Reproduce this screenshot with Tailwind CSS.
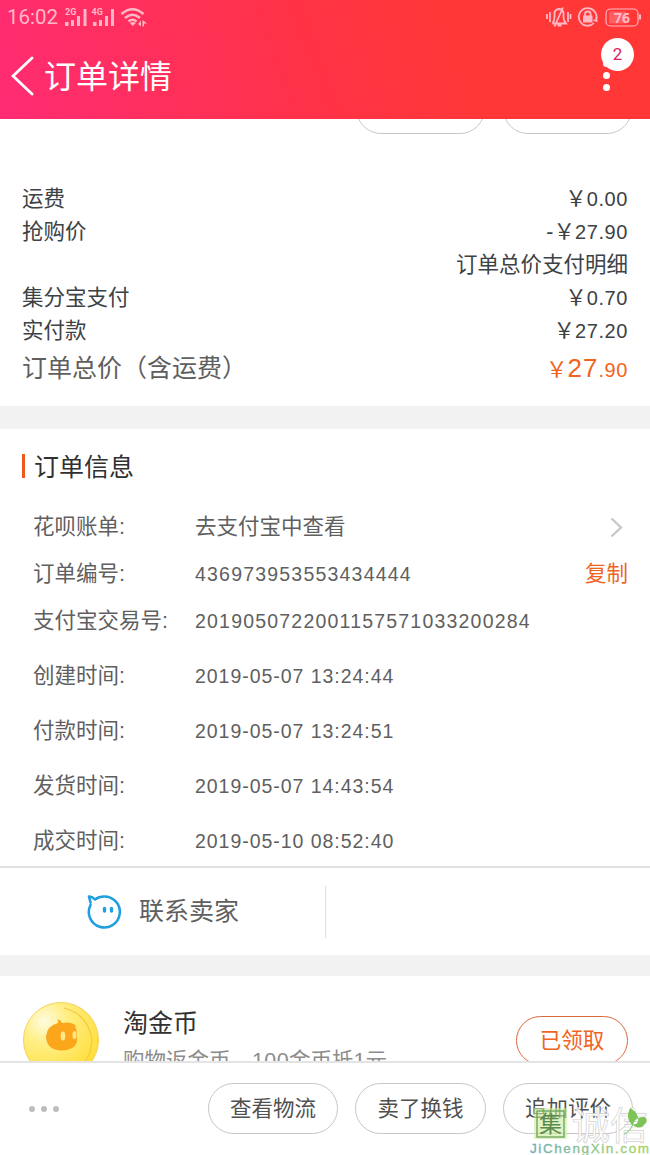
<!DOCTYPE html>
<html lang="zh-CN">
<head>
    <meta charset="UTF-8">
    <meta name="viewport" content="width=device-width, initial-scale=1.0">
    <title>订单详情</title>
    <script src="https://cdn.jsdelivr.net/npm/@tailwindcss/browser@4"></script>
</head>
<body class="relative flex flex-col w-[650px] h-[1155px] overflow-hidden bg-white text-[#5f5f5f] font-['Liberation_Sans','Noto_Sans_CJK_SC',sans-serif]">
    <!-- Header -->
    <header class="h-[119px] shrink-0 bg-linear-[70deg] from-[#ff2b74] via-[#ff3344] via-50% to-[#ff3737] to-70% text-white">
        <!-- Status bar -->
        <div class="flex items-center h-[33px] pl-[7px] pr-[9px] text-[#ffb9c6]">
            <span class="w-[57px] pt-[1px] font-['Roboto'] text-[20.500px] leading-[32px]">16:02</span>
            <svg width="84" height="22" viewBox="64 5 84 22" fill="currentColor">
                <text x="65" y="14" font-family="Roboto" font-weight="700" font-size="9">2G</text>
                <path d="M65 21h3.500v4h-3.500zM71 19h3v6h-3zM77 15h3v10h-3zM83.500 8h3v17h-3z"/>
                <text x="91.500" y="14" font-family="Roboto" font-weight="700" font-size="9">4G</text>
                <path d="M93 21h3.500v4h-3.500zM99 19h3v6h-3zM105 15h3v10h-3zM111 8h3v17h-3z"/>
                <g fill="none" stroke="currentColor" stroke-width="2.600">
                    <path d="M121.500 13q11-9.500 22 0M125 17q7.500-6.500 15 0M128.500 20.500q4-3.500 8 0"/>
                </g>
                <path d="M129.800 22q3-2 6 0l-3 3zM142.500 19l4.500 3.500h-3v3h-1.500zM141 19.500v6l-3-2.500z"/>
            </svg>
            <svg class="ml-auto" width="98" height="24" viewBox="543 4 98 24" fill="none" stroke="currentColor" stroke-width="1.800">
                <path d="M547 13v5M550 11v10M568 11v10M570.500 13v5M552.500 22.500h13.500q-2.500-3-2.500-6v-4q0-4-4.500-4.500-4.500.500-4.500 4.500v4q0 3-2 6M557.500 24.500h4M563 6.500l-8.500 19"/>
                <path d="M594 22a8.800 8.800 0 1 1 2.200-4"/>
                <path fill="currentColor" stroke="none" d="M583 14.500h9.500v7h-9.500z"/>
                <path d="M585 15v-2q0-2.500 2.800-2.500t2.800 2.500v2M596.500 16v4l-3-1"/>
                <rect x="606" y="8" width="32" height="17" rx="4.500" stroke-width="1.200"/>
                <path fill="currentColor" stroke="none" d="M609 10.500h17v12h-17z" opacity=".3"/>
                <path d="M640 13.500v5" stroke-width="2"/>
                <text x="622" y="22" text-anchor="middle" font-family="Noto Sans" font-weight="700" font-size="14" fill="currentColor" stroke="none">76</text>
            </svg>
        </div>
        <!-- Title bar -->
        <div class="flex items-center h-[86px] pl-[11px] pr-[16px]">
            <svg width="23" height="40" viewBox="0 0 23 40" fill="none" stroke="white" stroke-width="2.800" stroke-linecap="round">
                <path d="M21 2L2 20l19 18"/>
            </svg>
            <h1 class="ml-[10px] pt-[1px] text-[32px] leading-[40px]">订单详情</h1>
            <div class="relative ml-auto w-[33px] h-[76px]">
                <span class="absolute left-[2px] top-[22px] size-[7px] rounded-full bg-white"></span>
                <span class="absolute left-[2px] top-[34px] size-[7px] rounded-full bg-white"></span>
                <span class="absolute left-[2px] top-[46px] size-[7px] rounded-full bg-white"></span>
                <span class="absolute left-0 top-0 size-[33px] rounded-full bg-white text-center font-['Roboto'] text-[17px] leading-[33px] text-[#d8205c]">2</span>
            </div>
        </div>
    </header>

    <main class="flex flex-col flex-1 min-h-0 overflow-hidden">
        <!-- Buttons scrolled under the header -->
        <div class="flex items-end justify-end shrink-0 gap-[18px] h-[15px] pr-[18px] overflow-hidden">
            <div class="w-[129px] h-[50px] shrink-0 rounded-full border border-[#c6c6c6]"></div>
            <div class="w-[129px] h-[50px] shrink-0 rounded-full border border-[#c6c6c6]"></div>
        </div>

        <!-- Price details -->
        <section class="shrink-0 h-[272px] pt-[49px] px-[22px] text-[21.500px] leading-[33px] text-[#3d4245] whitespace-nowrap">
            <div class="flex justify-between h-[33px]"><span>运费</span><span>￥<span class="text-[20px] tracking-[0.600px]">0.00</span></span></div>
            <div class="flex justify-between h-[33px]"><span>抢购价</span><span>-￥<span class="text-[20px] tracking-[0.600px]">27.90</span></span></div>
            <div class="h-[33px] text-right">订单总价支付明细</div>
            <div class="flex justify-between h-[33px]"><span>集分宝支付</span><span>￥<span class="text-[20px] tracking-[0.600px]">0.70</span></span></div>
            <div class="flex justify-between h-[33px]"><span>实付款</span><span>￥<span class="text-[20px] tracking-[0.600px]">27.20</span></span></div>
            <div class="flex justify-between h-[40px] leading-[40px]">
                <span class="text-[25px] text-[#5f5f5f]">订单总价（含运费）</span>
                <span class="text-[#f0641e]">￥<span class="text-[26px] tracking-[1px]">27</span><span class="text-[20px] tracking-[0.600px]">.90</span></span>
            </div>
        </section>

        <div class="shrink-0 h-[23px] bg-[#f2f2f2]"></div>

        <!-- Order info -->
        <section class="shrink-0 h-[439px] pt-[17px] border-b-2 border-[#e0e0e0] text-[21.500px]">
            <div class="flex items-center h-[40px] pl-[22px]">
                <span class="w-[3px] h-[24px] bg-[#ee5a1b]"></span>
                <h2 class="ml-[9px] pt-[1px] text-[25px] leading-[40px] text-[#303030]">订单信息</h2>
            </div>
            <div class="flex items-center h-[47px] mt-[18px] pl-[33px] pr-[27px]">
                <span class="w-[162px]">花呗账单:</span>
                <span>去支付宝中查看</span>
                <svg class="ml-auto" width="13" height="22" viewBox="0 0 13 22" fill="none" stroke="#c8c8c8" stroke-width="2.400"><path d="M1.500 1.500l9.500 9-9.500 9"/></svg>
            </div>
            <div class="flex items-center h-[47px] pl-[33px] pr-[22px]">
                <span class="w-[162px]">订单编号:</span>
                <span class="pt-[1px] text-[19.500px] tracking-[1.200px]">436973953553434444</span>
                <span class="ml-auto text-[#f0641e]">复制</span>
            </div>
            <div class="flex items-center h-[47px] pl-[33px]">
                <span class="w-[162px]">支付宝交易号:</span>
                <span class="pt-[1px] text-[19.500px] tracking-[1.200px]">2019050722001157571033200284</span>
            </div>
            <div class="flex items-center h-[55px] mt-[4px] pl-[33px]">
                <span class="w-[162px]">创建时间:</span>
                <span class="pt-[1px] text-[19.500px] tracking-[0.960px]">2019-05-07 13:24:44</span>
            </div>
            <div class="flex items-center h-[55px] pl-[33px]">
                <span class="w-[162px]">付款时间:</span>
                <span class="pt-[1px] text-[19.500px] tracking-[0.960px]">2019-05-07 13:24:51</span>
            </div>
            <div class="flex items-center h-[55px] pl-[33px]">
                <span class="w-[162px]">发货时间:</span>
                <span class="pt-[1px] text-[19.500px] tracking-[0.960px]">2019-05-07 14:43:54</span>
            </div>
            <div class="flex items-center h-[54px] pl-[33px]">
                <span class="w-[162px]">成交时间:</span>
                <span class="pt-[1px] text-[19.500px] tracking-[0.960px]">2019-05-10 08:52:40</span>
            </div>
        </section>

        <!-- Contact seller -->
        <section class="flex items-center shrink-0 h-[87px]">
            <div class="flex items-center w-[326px] h-[52px] pl-[86px] border-r border-[#dedede]">
                <svg width="36" height="36" viewBox="0 0 36 36" fill="none" stroke="#1f9fe0" stroke-width="2.600" stroke-linecap="round" stroke-linejoin="round">
                    <path d="M4.500 8.500L3 2.500q3-.500 6 3Q13 2.500 18 2.500a15.500 15.500 0 1 1-13.500 8.500"/>
                    <path d="M18.500 14.500v2.500M25.500 14.500v2.500" stroke-width="3.400"/>
                </svg>
                <span class="ml-[17px] pt-[1px] text-[25px]">联系卖家</span>
            </div>
        </section>

        <div class="shrink-0 h-[21px] bg-[#f2f2f2]"></div>

        <!-- Coins -->
        <section class="flex shrink-0 h-[130px] px-[22px] pt-[25px]">
            <svg width="78" height="78" viewBox="0 0 78 78">
                <defs>
                    <radialGradient id="coin" cx=".28" cy=".25" r=".85">
                        <stop offset="0" stop-color="#fffbe0"/>
                        <stop offset=".35" stop-color="#ffef85"/>
                        <stop offset="1" stop-color="#ffdc35"/>
                    </radialGradient>
                </defs>
                <circle cx="39" cy="39" r="37.500" fill="url(#coin)" stroke="#f4d35c"/>
                <path d="M42 7q24 6 28 32-1 16-10 25" fill="none" stroke="#f3c945" stroke-width="1.200"/>
                <path d="M35 18q4 1 5 4 10-2 14 3l-1 1q2 2 2 8v7q-3 9-17 8.500Q24 48 24 35q1-10 12-13 1-2-1-4z" fill="#fca61c"/>
                <ellipse cx="41" cy="35" rx="2.300" ry="4.500" fill="#ffe78a"/>
                <ellipse cx="52.500" cy="34" rx="2" ry="4" fill="#ffe78a"/>
            </svg>
            <div class="ml-[23px]">
                <div class="h-[42px] text-[25px] leading-[44px] text-[#303030]">淘金币</div>
                <div class="text-[21.500px] leading-[36px] text-[#8c8c8c] whitespace-nowrap">购物返金币，<span class="tracking-[0.400px]">100</span>金币抵1元</div>
            </div>
            <div class="ml-auto mt-[15px] w-[112px] h-[49px] rounded-full border border-[#d9683a] text-center text-[21.500px] leading-[49px] text-[#f0641e]">已领取</div>
        </section>
    </main>

    <!-- Bottom actions -->
    <footer class="flex items-center shrink-0 h-[94px] pb-[1px] pl-[29px] pr-[17px] border-t-2 border-[#e4e4e4] bg-white text-[21.500px] text-[#505050]">
        <span class="flex gap-[6px]">
            <span class="size-[6px] rounded-full bg-[#bdbdbd]"></span>
            <span class="size-[6px] rounded-full bg-[#bdbdbd]"></span>
            <span class="size-[6px] rounded-full bg-[#bdbdbd]"></span>
        </span>
        <div class="flex gap-[17px] ml-auto">
            <button class="w-[130px] h-[51px] pt-[1px] rounded-full border border-[#c6c6c6]">查看物流</button>
            <button class="w-[131px] h-[51px] pt-[1px] rounded-full border border-[#c6c6c6]">卖了换钱</button>
            <button class="w-[130px] h-[51px] pt-[1px] rounded-full border border-[#c6c6c6]">追加评价</button>
        </div>
    </footer>

    <!-- Site stamp -->
    <svg class="absolute right-0 bottom-0" width="122" height="52" viewBox="528 1103 122 52">
        <defs>
            <linearGradient id="site" x1="0" x2="1">
                <stop offset="0" stop-color="#6aaebc"/>
                <stop offset=".5" stop-color="#8cc486"/>
                <stop offset="1" stop-color="#a5d45c"/>
            </linearGradient>
        </defs>
        <rect x="534" y="1108" width="33" height="31" fill="#c9ec9a" opacity=".6"/>
        <rect x="537" y="1111" width="27" height="26" fill="none" stroke="#6aa05a" stroke-width="1.300"/>
        <text x="550.500" y="1132" text-anchor="middle" font-family="Noto Sans CJK SC" font-size="23" fill="#5b8a50">集</text>
        <text x="572" y="1138.500" font-family="Noto Sans CJK SC" font-size="38" fill="#ffffff" fill-opacity=".85" stroke="#d0d0d0" stroke-width=".7">诚信</text>
        <path d="M630 1108q-5 10 2 17 8-1 6-8-2-6-8-9zM633 1125q2-9 12-8 4 4-1 8-5 5-11 0z" fill="#7cc456"/>
        <path d="M633 1124q-3 8-9 10" fill="none" stroke="#7cc456"/>
        <text x="530" y="1153" font-family="Liberation Sans" font-size="13.500" textLength="119" fill="url(#site)" stroke="url(#site)" stroke-width=".3">JiChengXin.com</text>
    </svg>
</body>
</html>
